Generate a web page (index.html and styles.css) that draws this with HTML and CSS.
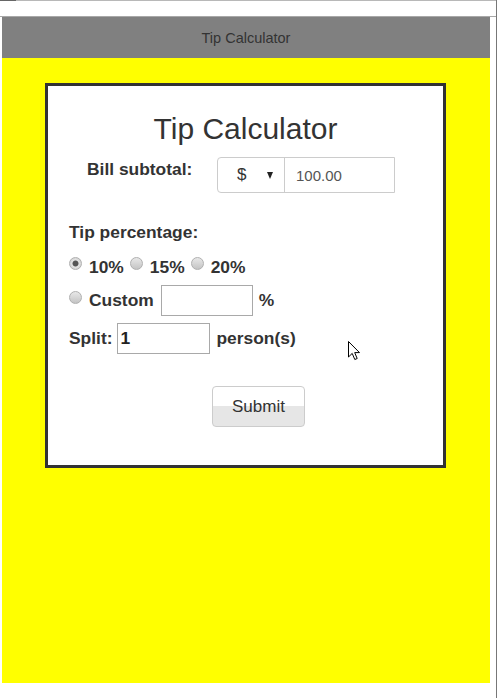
FILE: index.html
```html
<!DOCTYPE html>
<html>
<head>
<meta charset="utf-8">
<link rel="stylesheet" href="styles.css">
</head>
<body>
<div class="window">
  <div class="chrome"></div>
  <div class="app">
    <header class="appbar">Tip Calculator</header>
    <main class="stage">
      <form class="card">
        <h2 class="title">Tip Calculator</h2>
        <div class="bill-row">
          <label class="bill-label">Bill subtotal:</label>
          <div class="input-group">
            <div class="currency"><span class="cur-sym">$</span><span class="caret"></span></div>
            <div class="amount">100.00</div>
          </div>
        </div>
        <div class="tip-label">Tip percentage:</div>
        <div class="opts">
          <span class="opt"><span class="radio checked"></span>10%</span>
          <span class="opt"><span class="radio"></span>15%</span>
          <span class="opt"><span class="radio"></span>20%</span>
        </div>
        <div class="custom-row">
          <span class="radio"></span>Custom<span class="box box-custom"></span>%
        </div>
        <div class="split-row">
          Split:<span class="box box-split">1</span>person(s)
        </div>
        <div class="submit">Submit</div>
      </form>
    </main>
  </div>
</div>
<svg class="cursor" width="13" height="20" viewBox="0 0 13 20"><path d="M0.5 0.5 L0.5 16 L4.2 12.4 L6.8 18.5 L9.2 17.5 L6.7 11.6 L11.5 11.6 Z" fill="#fff" stroke="#000" stroke-width="1" stroke-linejoin="miter"/></svg>
</body>
</html>
```
FILE: styles.css
```css
body {
  margin: 0;
  background: #fff;
  font-family: "Liberation Sans", Arial, sans-serif;
  color: #333;
  position: relative;
}
.window {
  width: 496px;
  height: 698px;
  border-right: 1px solid #777;
}
.chrome {
  height: 16px;
  border-bottom: 1px solid #a8a8a8;
  background:
    linear-gradient(#666, #666) 0 0 / 16px 1px no-repeat,
    linear-gradient(#b8b8b8, #b8b8b8) 0 0 / 100% 1px no-repeat,
    #fff;
}
.app {
  margin-left: 2px;
  width: 488px;
}
.appbar {
  height: 41px;
  background: #808080;
  display: flex;
  align-items: center;
  justify-content: center;
  font-size: 14.5px;
  color: #333;
}
.stage {
  height: 625px;
  background: #ffff00;
  padding-top: 25px;
  box-sizing: border-box;
}
.card {
  width: 395px;
  margin: 0 0 0 43px;
  border: 3px solid #333;
  background: #fff;
  padding: 26px 0 38px;
  font-size: 17.4px;
  font-weight: bold;
}
.title {
  margin: 0;
  font-size: 30px;
  line-height: 33px;
  font-weight: normal;
  text-align: center;
  color: #333;
}
.bill-row {
  display: flex;
  margin-top: 12px;
  padding-left: 39px;
}
.bill-label {
  width: 130px;
  line-height: 24px;
}
.input-group {
  display: flex;
  width: 178px;
  height: 36px;
  box-sizing: border-box;
  border: 1px solid #ccc;
  border-radius: 4px 0 0 4px;
  font-weight: normal;
}
.currency {
  width: 67px;
  border-right: 1px solid #ccc;
  display: flex;
  align-items: center;
  padding-left: 19px;
  box-sizing: border-box;
  font-size: 17px;
  color: #333;
}
.caret {
  margin-left: 21px;
  width: 0;
  height: 0;
  border-left: 3.5px solid transparent;
  border-right: 3.5px solid transparent;
  border-top: 7px solid #222;
}
.amount {
  display: flex;
  align-items: center;
  padding-left: 11px;
  font-size: 15px;
  color: #555;
}
.tip-label {
  margin-top: 29px;
  line-height: 20px;
  padding-left: 21px;
}
.opts {
  display: flex;
  align-items: center;
  margin-top: 15px;
  height: 20px;
  padding-left: 21px;
}
.opt {
  display: flex;
  align-items: center;
}
.opt + .opt {
  margin-left: 6px;
}
.radio {
  display: inline-block;
  width: 13px;
  height: 13px;
  box-sizing: border-box;
  border-radius: 50%;
  border: 1px solid #b0b0b0;
  background: linear-gradient(#e8e8e8, #c4c4c4);
  margin-right: 7px;
  margin-bottom: 7px;
  flex: none;
}
.radio.checked {
  background: radial-gradient(circle, #555 0, #555 2.6px, #e4e4e4 3.4px, #d2d2d2 6px);
}
.custom-row {
  display: flex;
  align-items: center;
  margin-top: 8px;
  height: 31px;
  padding-left: 21px;
}
.custom-row .radio {
  margin-bottom: 6px;
}
.box {
  display: inline-flex;
  align-items: center;
  height: 31px;
  box-sizing: border-box;
  border: 1px solid #a9a9a9;
  background: #fff;
}
.box-custom {
  width: 92px;
  margin: 0 6px 0 7px;
}
.split-row {
  display: flex;
  align-items: center;
  margin-top: 7px;
  height: 31px;
  padding-left: 21px;
}
.box-split {
  width: 93px;
  margin: 0 6px 0 5px;
  padding-left: 2px;
  color: #222;
}
.submit {
  margin: 32px 0 0 164px;
  width: 93px;
  height: 41px;
  box-sizing: border-box;
  border: 1px solid #ccc;
  border-radius: 4px;
  background: linear-gradient(#fff 50%, #e6e6e6 50%);
  display: flex;
  align-items: center;
  justify-content: center;
  font-weight: normal;
  font-size: 17px;
  color: #333;
}
.cursor {
  position: absolute;
  left: 348px;
  top: 341px;
}
```
